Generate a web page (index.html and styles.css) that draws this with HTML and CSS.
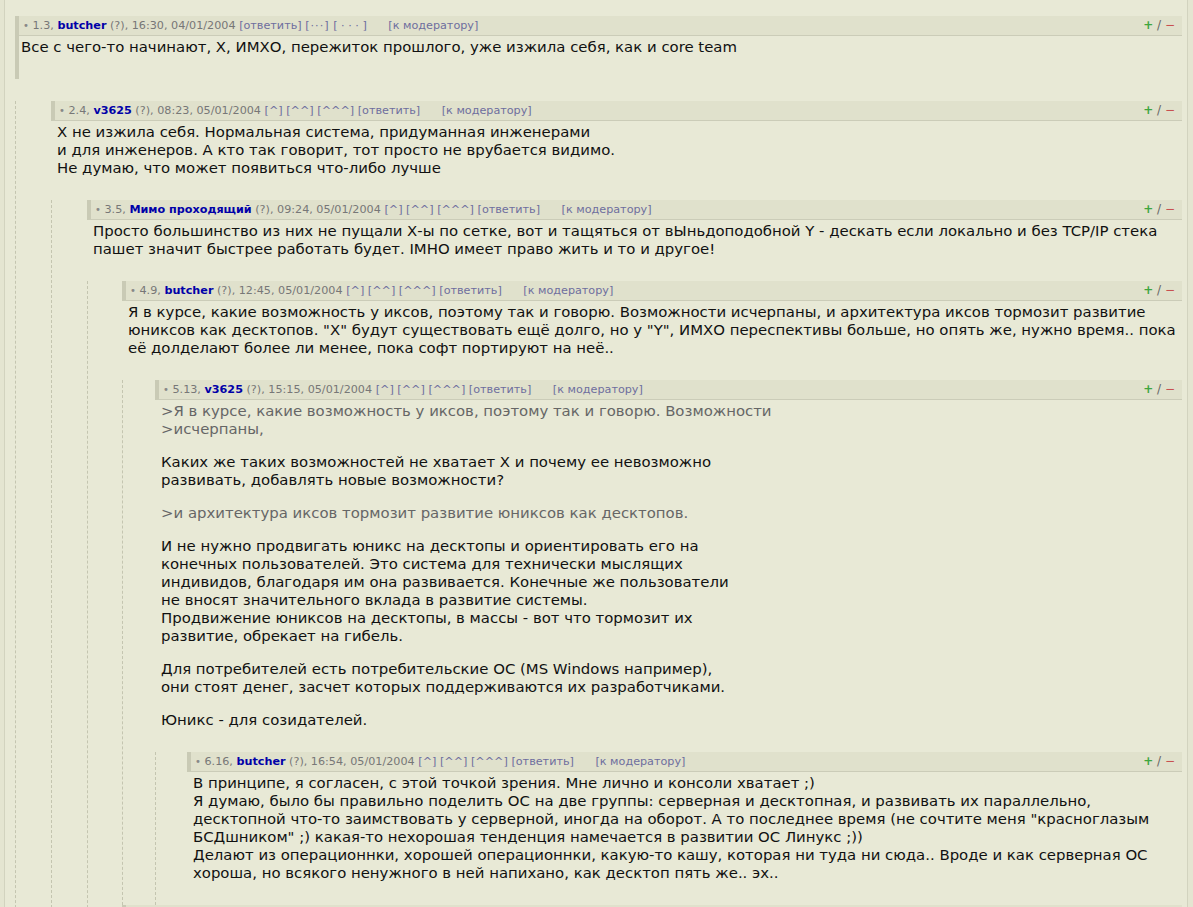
FILE: index.html
```html
<!DOCTYPE html>
<html lang="ru">

<head>
    <meta charset="UTF-8">
    <title>Комментарии</title>
    <link rel="stylesheet" href="styles.css">
</head>

<body>
    <div class="page">

        <div class="msg current">
            <div class="title">
                <span><span class="dot">&bull;</span> 1.3, <a class="nick" href="#">butcher</a> (?), 16:30, 04/01/2004 <a href="#">[ответить]</a> <a href="#" class="dots">[&middot;&middot;&middot;]</a> <a href="#">[ &middot; &middot; &middot; ]</a> <a href="#" class="moder">[к модератору]</a></span>
                <span class="vote"><span class="plus">+</span> / <span class="minus">&minus;</span></span>
            </div>
            <div class="text">
                Все с чего-то начинают, Х, ИМХО, пережиток прошлого, уже изжила себя, как и core team
            </div>
        </div>

        <div class="replies l2">
            <div class="msg">
                <div class="title">
                    <span><span class="dot">&bull;</span> 2.4, <a class="nick" href="#">v3625</a> (?), 08:23, 05/01/2004 <a href="#">[^]</a> <a href="#">[^^]</a> <a href="#">[^^^]</a> <a href="#">[ответить]</a> <a href="#" class="moder">[к модератору]</a></span>
                    <span class="vote"><span class="plus">+</span> / <span class="minus">&minus;</span></span>
                </div>
                <div class="text">
                    Х не изжила себя. Нормальная система, придуманная инженерами<br>
                    и для инженеров. А кто так говорит, тот просто не врубается видимо.<br>
                    Не думаю, что может появиться что-либо лучше
                </div>
            </div>

            <div class="replies l3">
                <div class="msg">
                    <div class="title">
                        <span><span class="dot">&bull;</span> 3.5, <a class="nick" href="#">Мимо проходящий</a> (?), 09:24, 05/01/2004 <a href="#">[^]</a> <a href="#">[^^]</a> <a href="#">[^^^]</a> <a href="#">[ответить]</a> <a href="#" class="moder">[к модератору]</a></span>
                        <span class="vote"><span class="plus">+</span> / <span class="minus">&minus;</span></span>
                    </div>
                    <div class="text">
                        Просто большинство из них не пущали Х-ы по сетке, вот и тащяться от вЫньдоподобной Y - дескать если локально и без TCP/IP стека пашет значит быстрее работать будет. IMHO имеет право жить и то и другое!
                    </div>
                </div>

                <div class="replies l4">
                    <div class="msg">
                        <div class="title">
                            <span><span class="dot">&bull;</span> 4.9, <a class="nick" href="#">butcher</a> (?), 12:45, 05/01/2004 <a href="#">[^]</a> <a href="#">[^^]</a> <a href="#">[^^^]</a> <a href="#">[ответить]</a> <a href="#" class="moder">[к модератору]</a></span>
                            <span class="vote"><span class="plus">+</span> / <span class="minus">&minus;</span></span>
                        </div>
                        <div class="text">
                            Я в курсе, какие возможность у иксов, поэтому так и говорю. Возможности исчерпаны, и архитектура иксов тормозит развитие юниксов как десктопов. "X" будут существовать ещё долго, но у "Y", ИМХО переспективы больше, но опять же, нужно время.. пока её долделают более ли менее, пока софт портируют на неё..
                        </div>
                    </div>

                    <div class="replies l5">
                        <div class="msg">
                            <div class="title">
                                <span><span class="dot">&bull;</span> 5.13, <a class="nick" href="#">v3625</a> (?), 15:15, 05/01/2004 <a href="#">[^]</a> <a href="#">[^^]</a> <a href="#">[^^^]</a> <a href="#">[ответить]</a> <a href="#" class="moder">[к модератору]</a></span>
                                <span class="vote"><span class="plus">+</span> / <span class="minus">&minus;</span></span>
                            </div>
                            <div class="text">
                                <p class="quote">&gt;Я в курсе, какие возможность у иксов, поэтому так и говорю. Возможности<br>&gt;исчерпаны,</p>
                                <p>Каких же таких возможностей не хватает Х и почему ее невозможно<br>развивать, добавлять новые возможности?</p>
                                <p class="quote">&gt;и архитектура иксов тормозит развитие юниксов как десктопов.</p>
                                <p>И не нужно продвигать юникс на десктопы и ориентировать его на<br>конечных пользователей. Это система для технически мыслящих<br>индивидов, благодаря им она развивается. Конечные же пользователи<br>не вносят значительного вклада в развитие системы.<br>Продвижение юниксов на десктопы, в массы - вот что тормозит их<br>развитие, обрекает на гибель.</p>
                                <p>Для потребителей есть потребительские ОС (MS Windows например),<br>они стоят денег, засчет которых поддерживаются их разработчиками.</p>
                                <p>Юникс - для созидателей.</p>
                            </div>
                        </div>

                        <div class="replies l6">
                            <div class="msg">
                                <div class="title">
                                    <span><span class="dot">&bull;</span> 6.16, <a class="nick" href="#">butcher</a> (?), 16:54, 05/01/2004 <a href="#">[^]</a> <a href="#">[^^]</a> <a href="#">[^^^]</a> <a href="#">[ответить]</a> <a href="#" class="moder">[к модератору]</a></span>
                                    <span class="vote"><span class="plus">+</span> / <span class="minus">&minus;</span></span>
                                </div>
                                <div class="text">
                                    В принципе, я согласен, с этой точкой зрения. Мне лично и консоли хватает ;)<br>
                                    Я думаю, было бы правильно поделить ОС на две группы: серверная и десктопная, и развивать их параллельно, десктопной что-то заимствовать у серверной, иногда на оборот. А то последнее время (не сочтите меня "красноглазым БСДшником" ;) какая-то нехорошая тенденция намечается в развитии ОС Линукс ;))<br>
                                    Делают из операционнки, хорошей операционнки, какую-то кашу, которая ни туда ни сюда.. Вроде и как серверная ОС хороша, но всякого ненужного в ней напихано, как десктоп пять же.. эх..
                                </div>
                            </div>
                        </div>
                    </div>

                    <div class="msg">
                        <div class="title">
                            <span><span class="dot">&bull;</span> 4.17, <a class="nick" href="#">butcher</a> (?), 17:02, 05/01/2004 <a href="#">[^]</a> <a href="#">[^^]</a> <a href="#">[^^^]</a> <a href="#">[ответить]</a> <a href="#" class="moder">[к модератору]</a></span>
                            <span class="vote"><span class="plus">+</span> / <span class="minus">&minus;</span></span>
                        </div>
                        <div class="text">
                            Ну ладно, посмотрим что будет дальше.
                        </div>
                    </div>
                </div>
            </div>
        </div>

    </div>
</body>

</html>
```

FILE: styles.css
```css
body {
    margin: 0;
    background-color: #e4e5d1;
    font-family: "DejaVu Sans", sans-serif;
    color: #111;
}

.page {
    margin: 0 5px 0 4px;
    padding: 16px 5px 0 10px;
    background-color: #e8e9d6;
    border-left: 1px solid #d2d3bf;
    border-right: 1px solid #d2d3bf;
    min-height: 907px;
    box-sizing: border-box;
}

a {
    color: #6e6e9e;
    text-decoration: none;
}

.title {
    display: flex;
    justify-content: space-between;
    background-color: #e0e1cc;
    border-left: 4px solid #c9cab5;
    border-bottom: 1px solid #cbccb8;
    padding: 0 7px 0 4px;
    font-size: 11.2px;
    line-height: 19px;
    color: #777;
}

.title .nick {
    color: #0000a8;
    font-weight: bold;
}

.title .dot {
    font-size: 10px;
    color: #888;
}

.title .dots {
    letter-spacing: 1px;
}

.title .moder {
    margin-left: 18px;
}

.vote {
    color: #666;
    font-size: 12px;
}

.vote .plus {
    color: #3fa63f;
    font-weight: bold;
}

.vote .minus {
    color: #c85050;
}

.text {
    font-size: 14.9px;
    line-height: 18px;
    padding: 2px 0 23px 6px;
}

.text p {
    margin: 15px 0;
}

.text p:first-child {
    margin-top: 0;
}

.text p:last-child {
    margin-bottom: 0;
}

.text .quote {
    color: #666;
}

.current {
    border-left: 4px solid #c9cab5;
    margin-bottom: 22px;
}

.current .title {
    border-left: 0;
}

.current .text {
    padding-left: 2px;
}

.replies {
    border-left: 1px dashed #c4c5b0;
}

.l2 {
    padding-left: 35px;
}

.l3 {
    padding-left: 35px;
}

.l4 {
    padding-left: 34px;
}

.l5 {
    padding-left: 32px;
}

.l6 {
    padding-left: 31px;
}
```
